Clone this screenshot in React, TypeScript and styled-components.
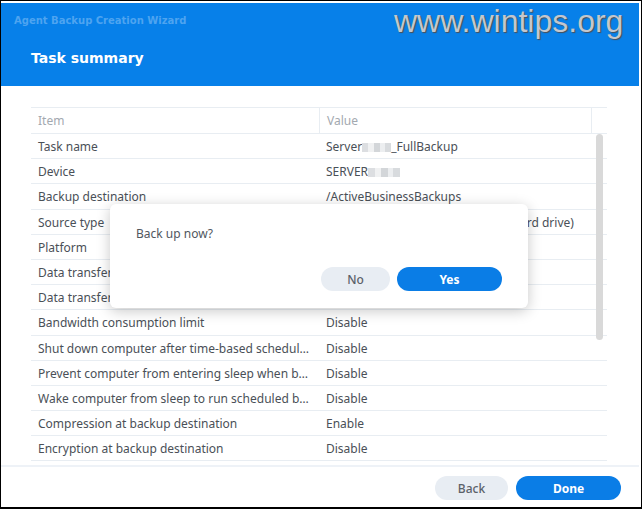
import styled, { createGlobalStyle } from 'styled-components'

const GlobalStyle = createGlobalStyle`
  html, body {
    margin: 0;
    padding: 0;
    background: #000;
  }
  * {
    box-sizing: border-box;
  }
`

const uiFont = `'Noto Sans', 'Open Sans', sans-serif`
const accent = '#0a7de6'
const rowLine = '#e8edf2'

type Row = { item: string; value: React.ReactNode }

const summaryRows = (): Row[] => [
  { item: 'Task name', value: <>Server<Redacted $w={29} />_FullBackup</> },
  { item: 'Device', value: <>SERVER<Redacted $w={32} /></> },
  { item: 'Backup destination', value: '/ActiveBusinessBackups' },
  { item: 'Source type', value: 'Entire Device (Excluding external hard drive)' },
  { item: 'Platform', value: 'Windows' },
  { item: 'Data transfer compression', value: 'Enable' },
  { item: 'Data transfer encryption', value: 'Enable' },
  { item: 'Bandwidth consumption limit', value: 'Disable' },
  { item: 'Shut down computer after time-based scheduled backup', value: 'Disable' },
  { item: 'Prevent computer from entering sleep when backing up', value: 'Disable' },
  { item: 'Wake computer from sleep to run scheduled backup', value: 'Disable' },
  { item: 'Compression at backup destination', value: 'Enable' },
  { item: 'Encryption at backup destination', value: 'Disable' },
]

export default function App() {
  return (
    <>
      <GlobalStyle />
      <Frame>
        <Window>
          <Header>
            <WizardTitle>Agent Backup Creation Wizard</WizardTitle>
            <StepTitle>Task summary</StepTitle>
            <Watermark>www.wintips.org</Watermark>
          </Header>

          <Content>
            <Table>
              <HeadRow>
                <HeadCell>Item</HeadCell>
                <HeadCell>Value</HeadCell>
                <HeadCell />
              </HeadRow>
              <Body>
                {summaryRows().map((r) => (
                  <BodyRow key={r.item}>
                    <Cell>{r.item}</Cell>
                    <Cell>{r.value}</Cell>
                  </BodyRow>
                ))}
                <ScrollThumb />
              </Body>
            </Table>
          </Content>

          <Footer>
            <PillButton>Back</PillButton>
            <PillButton $primary $wide>Done</PillButton>
          </Footer>
        </Window>

        <Dialog>
          <DialogText>Back up now?</DialogText>
          <DialogActions>
            <PillButton $narrow>No</PillButton>
            <PillButton $primary $wide>Yes</PillButton>
          </DialogActions>
        </Dialog>
      </Frame>
    </>
  )
}

const Frame = styled.div`
  position: relative;
  width: 642px;
  height: 509px;
  padding: 1px 1px 2px 1px;
  background: #000;
`

const Window = styled.div`
  display: flex;
  flex-direction: column;
  height: 506px;
  padding: 2px 2px 0 0;
  background: #fff;
  font-family: ${uiFont};
`

const Header = styled.header`
  position: relative;
  display: flex;
  flex-direction: column;
  height: 83px;
  padding: 12px 0 0 13px;
  background: #0780e9;
`

const WizardTitle = styled.div`
  font-family: 'DejaVu Sans', Verdana, sans-serif;
  font-size: 10px;
  font-weight: bold;
  line-height: 12px;
  color: #4ea4f0;
`

const StepTitle = styled.h1`
  margin: 22px 0 0 17px;
  font-family: 'DejaVu Sans', Verdana, sans-serif;
  font-size: 14px;
  font-weight: bold;
  line-height: 18px;
  color: #fff;
`

const Watermark = styled.div`
  position: absolute;
  top: 0;
  left: 393px;
  font-family: 'Liberation Sans', Arial, sans-serif;
  font-size: 32px;
  line-height: 36px;
  color: #c3c7ce;
  text-shadow: 1px 1px 1px #4a4f57;
`

const Content = styled.main`
  flex: 1;
  min-height: 0;
  padding: 21px 32px 0 30px;
  overflow: hidden;
`

const Table = styled.div`
  display: flex;
  flex-direction: column;
  height: 100%;
`

const HeadRow = styled.div`
  display: grid;
  grid-template-columns: 288px 273px 1fr;
  height: 27px;
  border-top: 1px solid ${rowLine};
  border-bottom: 1px solid ${rowLine};
`

const HeadCell = styled.div`
  display: flex;
  align-items: center;
  padding-left: 7px;
  font-size: 12px;
  color: #a3a9b0;
  &:nth-child(2) {
    border-left: 1px solid ${rowLine};
    border-right: 1px solid ${rowLine};
  }
`

const Body = styled.div`
  position: relative;
  flex: 1;
  min-height: 0;
  overflow: hidden;
`

const BodyRow = styled.div`
  display: grid;
  grid-template-columns: 288px 1fr;
  height: 25.2px;
  border-bottom: 1px solid ${rowLine};
`

const Cell = styled.div`
  min-width: 0;
  padding: 0 7px;
  font-size: 12px;
  line-height: 25px;
  color: #4a5057;
  white-space: nowrap;
  overflow: hidden;
  text-overflow: ellipsis;
`

const Redacted = styled.span<{ $w: number }>`
  display: inline-block;
  width: ${(p) => p.$w}px;
  height: 9px;
  vertical-align: -1px;
  background: linear-gradient(
    90deg,
    #dcdee1 0 22%,
    #f0f1f2 22% 40%,
    #d3d6d9 40% 62%,
    #eceef0 62% 78%,
    #d8dbde 78%
  );
`

const ScrollThumb = styled.div`
  position: absolute;
  top: 0;
  left: 565px;
  width: 7px;
  height: 206px;
  border-radius: 4px;
  background: #d9d9d9;
`

const Footer = styled.footer`
  display: flex;
  justify-content: flex-end;
  align-items: center;
  gap: 8px;
  height: 42px;
  padding: 2px 18px 0 0;
  border-top: 2px solid #eef2f7;
`

const PillButton = styled.button<{ $primary?: boolean; $wide?: boolean; $narrow?: boolean }>`
  width: ${(p) => (p.$wide ? 105 : p.$narrow ? 69 : 73)}px;
  height: 24px;
  border: none;
  border-radius: 12px;
  font-family: ${uiFont};
  font-size: 12px;
  font-weight: ${(p) => (p.$primary ? 700 : 500)};
  color: ${(p) => (p.$primary ? '#fff' : '#5b6169')};
  background: ${(p) => (p.$primary ? accent : '#e8edf3')};
`

const Dialog = styled.div`
  position: absolute;
  left: 110px;
  top: 204px;
  width: 418px;
  height: 104px;
  display: flex;
  flex-direction: column;
  padding: 22px 26px 17px 26px;
  border-radius: 6px;
  background: #fff;
  box-shadow: 0 3px 14px rgba(0, 0, 0, 0.22);
  font-family: ${uiFont};
`

const DialogText = styled.p`
  margin: 0;
  font-size: 12px;
  line-height: 16px;
  color: #51575e;
`

const DialogActions = styled.div`
  display: flex;
  justify-content: flex-end;
  gap: 7px;
  margin-top: auto;
`
